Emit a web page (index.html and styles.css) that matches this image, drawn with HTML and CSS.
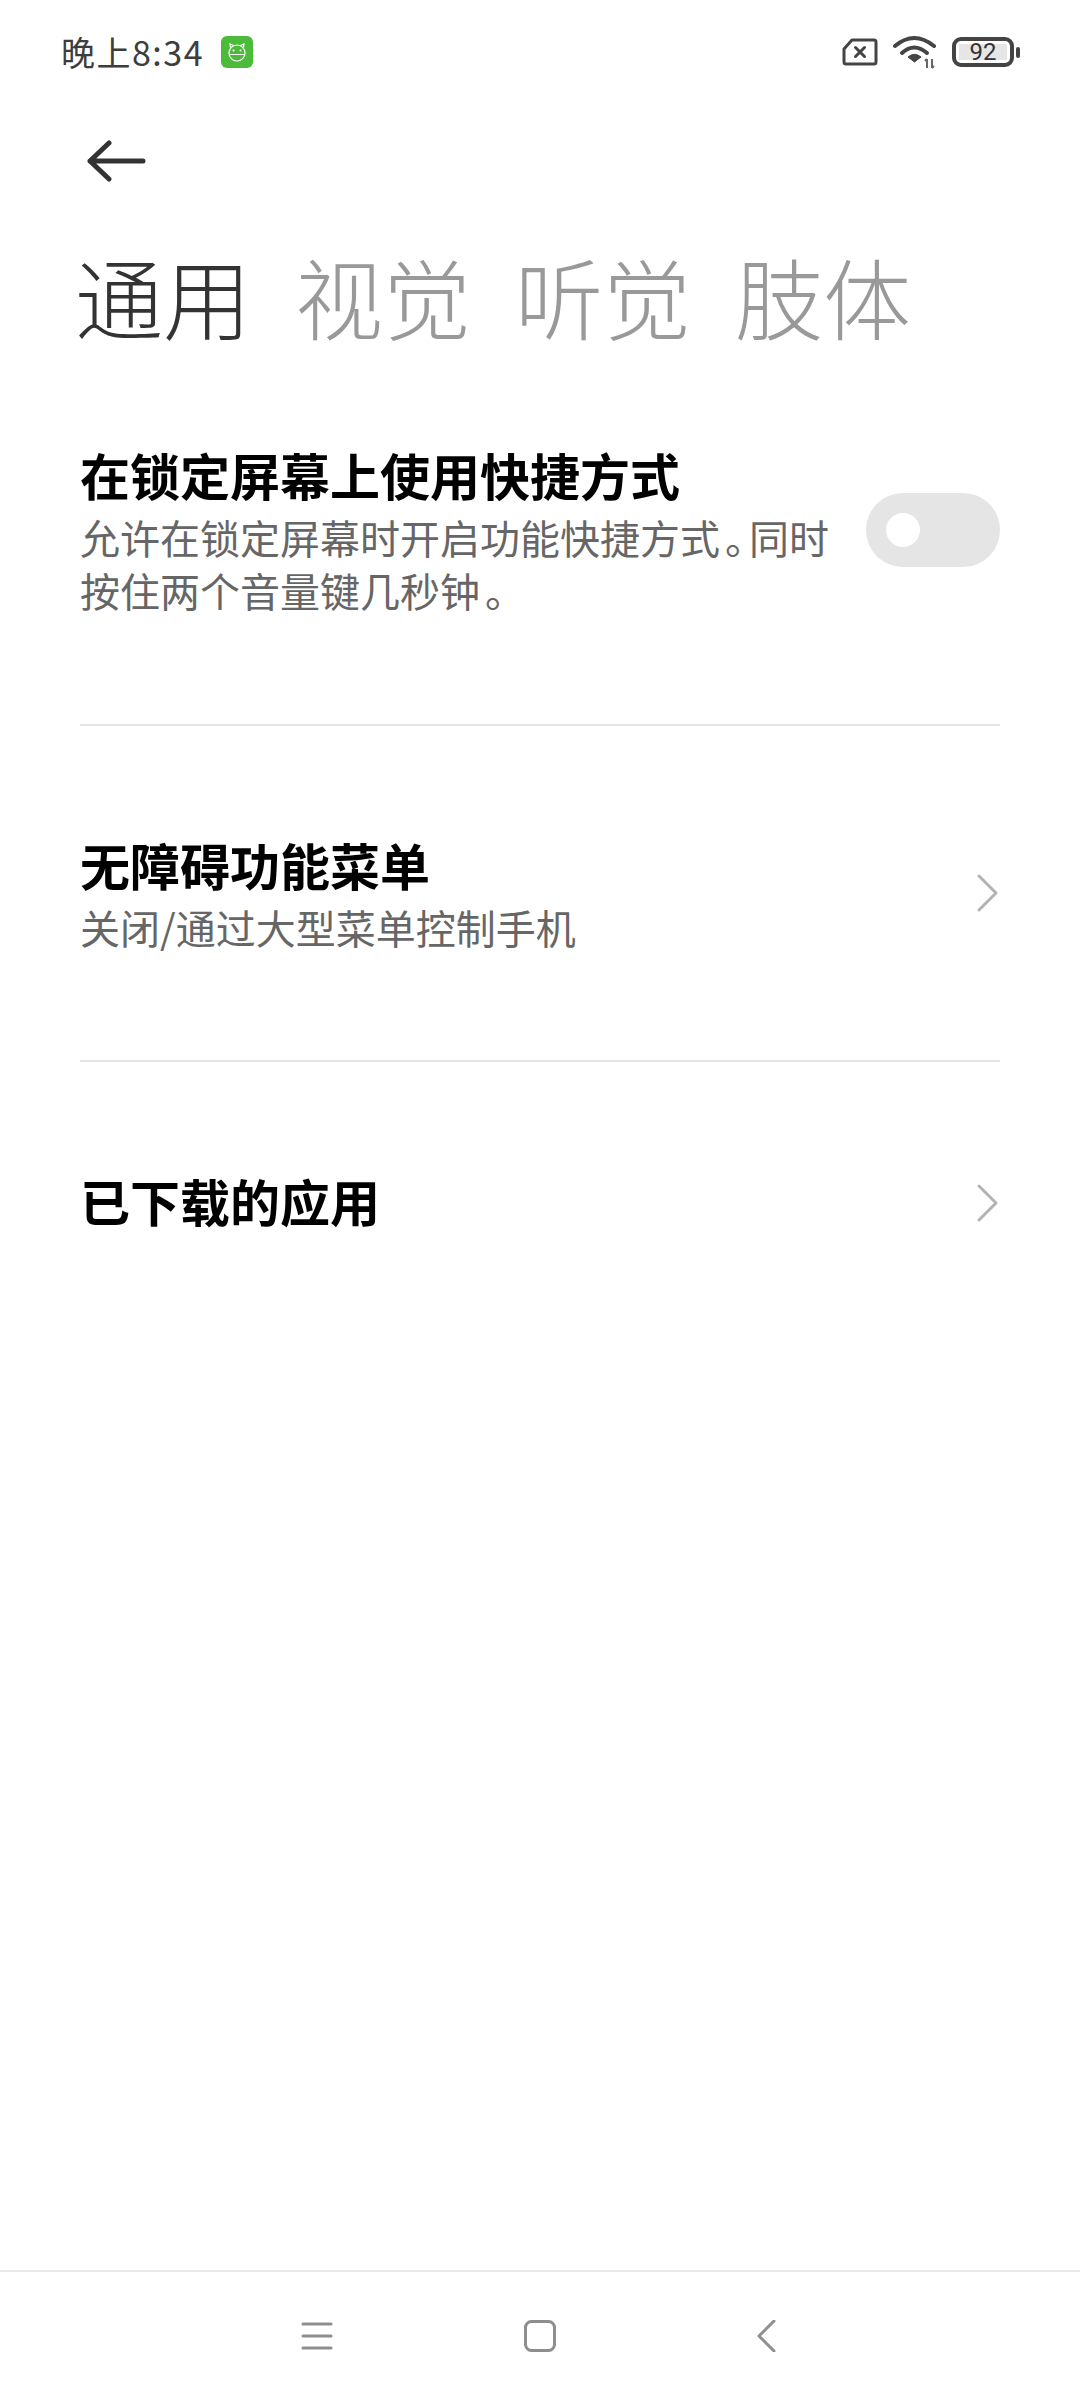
FILE: index.html
```html
<!DOCTYPE html>
<html lang="zh-CN">
<head>
  <meta charset="UTF-8" />
  <title>无障碍</title>
  <link rel="stylesheet" href="styles.css">
</head>
<body>
<div class="phone">
  <div class="status-bar">
    <div class="status-left">
      <span class="clock">晚上8:34</span>
      <svg class="app-badge" width="32" height="32" viewBox="0 0 32 32">
        <rect width="32" height="32" rx="6" fill="#4dbb3a"/>
        <circle cx="16" cy="17" r="8" fill="none" stroke="#fff" stroke-width="1.2"/>
        <path d="M9.500 11.500 L9 8 L12.500 9.500 M22.500 11.500 L23 8 L19.500 9.500" fill="none" stroke="#fff" stroke-width="1.2"/>
        <path d="M8 18.500 H24" stroke="#fff" stroke-width="1"/>
        <circle cx="12.500" cy="14.500" r="1" fill="#fff"/>
        <circle cx="19.500" cy="14.500" r="1" fill="#fff"/>
      </svg>
    </div>
    <div class="status-right">
      <svg width="36" height="28" viewBox="0 0 36 28">
        <path d="M10 2 H32 Q34 2 34 4 V24 Q34 26 32 26 H4 Q2 26 2 24 V11 Z" fill="none" stroke="#444" stroke-width="3" stroke-linejoin="round"/>
        <path d="M13.500 9.500 L22.500 18.500 M22.500 9.500 L13.500 18.500" stroke="#444" stroke-width="3" stroke-linecap="round"/>
      </svg>
      <svg width="44" height="34" viewBox="0 0 44 34">
        <path d="M2 11 Q21 -5 41 11" fill="none" stroke="#444" stroke-width="4" stroke-linecap="round"/>
        <path d="M9 18 Q21 7 34 18" fill="none" stroke="#444" stroke-width="4" stroke-linecap="round"/>
        <path d="M21.500 27 L15 22 Q21.500 16.500 28 22 Z" fill="#444" stroke="#444" stroke-linejoin="round"/>
        <path d="M34 24 V33 M32 26 L34 24 M39 24 V33 M41 31 L39 33" fill="none" stroke="#666" stroke-width="2"/>
      </svg>
      <div class="battery">
        <div class="battery-body"><span class="battery-level">92</span></div>
        <div class="battery-nub"></div>
      </div>
    </div>
  </div>

  <div class="back-row">
    <svg width="60" height="42" viewBox="0 0 60 42">
      <path d="M22 3 L3 21 L22 39 M3 21 H56" fill="none" stroke="#333" stroke-width="5" stroke-linecap="round" stroke-linejoin="round"/>
    </svg>
  </div>

  <div class="tabs">
    <span class="tab active">通用</span>
    <span class="tab">视觉</span>
    <span class="tab">听觉</span>
    <span class="tab">肢体</span>
  </div>

  <div class="list">
    <div class="row row-first">
      <div class="row-text">
        <div class="row-title">在锁定屏幕上使用快捷方式</div>
        <div class="row-sub">允许在锁定屏幕时开启功能快捷方式<span class="stop">。</span>同时</div>
        <div class="row-sub">按住两个音量键几秒钟<span class="stop">。</span></div>
      </div>
      <div class="toggle"><div class="toggle-knob"></div></div>
    </div>
    <div class="row row-second">
      <div class="row-text">
        <div class="row-title">无障碍功能菜单</div>
        <div class="row-sub">关闭/通过大型菜单控制手机</div>
      </div>
      <svg class="chevron" width="24" height="40" viewBox="0 0 24 40">
        <path d="M3 3 L20 20 L3 37" fill="none" stroke="#b3b3b3" stroke-width="3" stroke-linecap="round" stroke-linejoin="round"/>
      </svg>
    </div>
    <div class="row row-third">
      <div class="row-text">
        <div class="row-title">已下载的应用</div>
      </div>
      <svg class="chevron" width="24" height="40" viewBox="0 0 24 40">
        <path d="M3 3 L20 20 L3 37" fill="none" stroke="#b3b3b3" stroke-width="3" stroke-linecap="round" stroke-linejoin="round"/>
      </svg>
    </div>
  </div>

  <div class="nav-bar">
    <svg width="32" height="32" viewBox="0 0 32 32">
      <path d="M2 4 H30 M2 16 H30 M2 28 H30" stroke="#8e8e8e" stroke-width="3" stroke-linecap="round"/>
    </svg>
    <svg width="32" height="32" viewBox="0 0 32 32">
      <rect x="1.500" y="1.500" width="29" height="29" rx="6" fill="none" stroke="#8e8e8e" stroke-width="3"/>
    </svg>
    <svg width="32" height="32" viewBox="0 0 32 32">
      <path d="M27 1 L12 16 L27 31" fill="none" stroke="#8e8e8e" stroke-width="3" stroke-linecap="round" stroke-linejoin="round"/>
    </svg>
  </div>
</div>
</body>
</html>
```

FILE: styles.css
```css
* {
    box-sizing: border-box;
}

body {
    margin: 0;
    background-color: #fff;
    font-family: "Noto Sans CJK SC", "Noto Sans", sans-serif;
}

.phone {
    width: 1080px;
    height: 2400px;
    display: flex;
    flex-direction: column;
}

.status-bar {
    height: 106px;
    padding: 0 60px 2px 61px;
    display: flex;
    justify-content: space-between;
    align-items: center;
}

.status-left, .status-right {
    display: flex;
    align-items: center;
}

.clock {
    font-size: 34px;
    line-height: 40px;
    letter-spacing: 1.500px;
    color: #3d3d3d;
}

.app-badge {
    margin-left: 17px;
}

.status-right svg {
    margin-right: 15px;
}

.battery {
    display: flex;
    align-items: center;
}

.battery-body {
    width: 62px;
    height: 30px;
    border: 4px solid #444;
    border-radius: 9px;
    padding: 3px;
}

.battery-level {
    display: block;
    height: 16px;
    background-color: #e6e6e6;
    font-family: "Roboto", sans-serif;
    font-size: 24px;
    line-height: 16px;
    text-align: center;
    color: #333;
}

.battery-nub {
    width: 4px;
    height: 11px;
    margin-left: 2px;
    border-radius: 2px;
    background-color: #444;
}

.back-row {
    height: 76px;
    padding: 34px 0 0 87px;
}

.tabs {
    height: 234px;
    padding: 0 0 8px 75px;
    display: flex;
    gap: 44px;
    align-items: center;
}

.tab {
    font-size: 88px;
    font-weight: 300;
    line-height: 100px;
    color: #999;
}

.tab.active {
    color: #333;
}

.list {
    flex: 1;
    padding: 0 80px;
}

.row {
    display: flex;
    align-items: center;
    justify-content: space-between;
    border-bottom: 2px solid #e6e6e6;
}

.row-first {
    height: 310px;
    padding-bottom: 80px;
}

.row-second {
    height: 336px;
}

.row-third {
    height: 282px;
    border-bottom: none;
}

.row-text {
    width: 760px;
    padding-bottom: 2px;
}

.row-title {
    font-size: 50px;
    font-weight: 700;
    line-height: 66px;
    margin-bottom: 4px;
    color: #000;
}

.row-sub {
    font-size: 40px;
    line-height: 53px;
    white-space: nowrap;
    color: #666;
}

/* full stop sits in a narrower cell than the other glyphs */
.stop {
    font-feature-settings: "halt";
    margin: 0 4px 0 5px;
}

.toggle {
    width: 134px;
    height: 74px;
    padding: 20px;
    border-radius: 37px;
    background-color: #e5e5e5;
}

.toggle-knob {
    width: 34px;
    height: 34px;
    border-radius: 50%;
    background-color: #fff;
}

.nav-bar {
    height: 130px;
    border-top: 2px solid #e8e8e8;
    display: flex;
    justify-content: center;
    gap: 191px;
    align-items: center;
}
```
